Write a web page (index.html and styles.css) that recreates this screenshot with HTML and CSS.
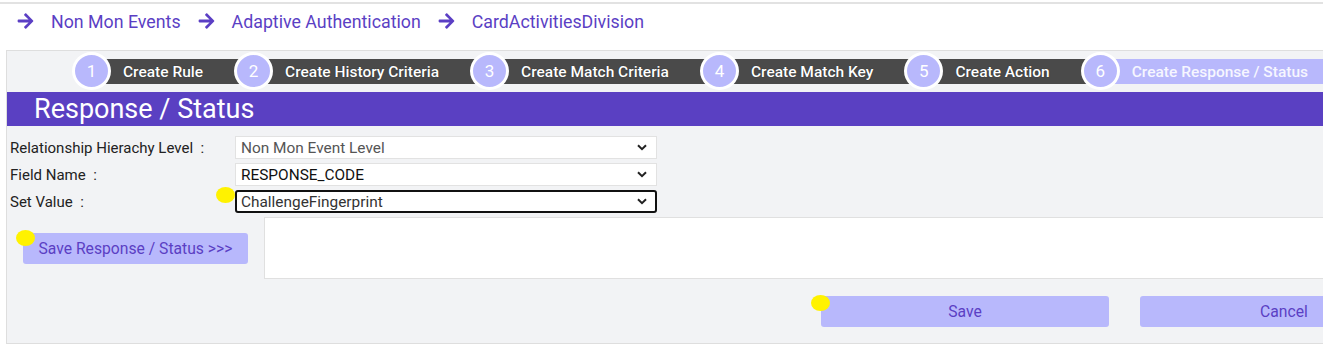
FILE: index.html
```html
<!DOCTYPE html>
<html lang="en">

<head>
    <meta charset="UTF-8">
    <meta name="viewport" content="width=device-width, initial-scale=1.0">
    <title>Response / Status</title>
    <link rel="stylesheet" href="styles.css">
</head>

<body>

    <div class="topline"></div>

    <div class="crumbs">
        <svg class="arrow" viewBox="0 0 448 512"><path d="M190.5 66.9l22.2-22.2c9.4-9.4 24.6-9.4 33.9 0L441 239c9.4 9.4 9.4 24.6 0 33.9L246.6 467.3c-9.4 9.4-24.6 9.4-33.9 0l-22.2-22.2c-9.5-9.5-9.3-25 .4-34.3L311.4 296H24c-13.3 0-24-10.7-24-24v-32c0-13.3 10.7-24 24-24h287.4L190.9 101.2c-9.8-9.3-10-24.8-.4-34.3z"/></svg>
        <a href="#">Non Mon Events</a>
        <svg class="arrow" viewBox="0 0 448 512"><path d="M190.5 66.9l22.2-22.2c9.4-9.4 24.6-9.4 33.9 0L441 239c9.4 9.4 9.4 24.6 0 33.9L246.6 467.3c-9.4 9.4-24.6 9.4-33.9 0l-22.2-22.2c-9.5-9.5-9.3-25 .4-34.3L311.4 296H24c-13.3 0-24-10.7-24-24v-32c0-13.3 10.7-24 24-24h287.4L190.9 101.2c-9.8-9.3-10-24.8-.4-34.3z"/></svg>
        <a href="#">Adaptive Authentication</a>
        <svg class="arrow" viewBox="0 0 448 512"><path d="M190.5 66.9l22.2-22.2c9.4-9.4 24.6-9.4 33.9 0L441 239c9.4 9.4 9.4 24.6 0 33.9L246.6 467.3c-9.4 9.4-24.6 9.4-33.9 0l-22.2-22.2c-9.5-9.5-9.3-25 .4-34.3L311.4 296H24c-13.3 0-24-10.7-24-24v-32c0-13.3 10.7-24 24-24h287.4L190.9 101.2c-9.8-9.3-10-24.8-.4-34.3z"/></svg>
        <a href="#">CardActivitiesDivision</a>
    </div>

    <div class="panel">
        <div class="steps">
            <div class="step"><span class="num">1</span><span class="label">Create Rule</span></div>
            <div class="step"><span class="num">2</span><span class="label">Create History Criteria</span></div>
            <div class="step"><span class="num">3</span><span class="label">Create Match Criteria</span></div>
            <div class="step"><span class="num">4</span><span class="label">Create Match Key</span></div>
            <div class="step"><span class="num">5</span><span class="label">Create Action</span></div>
            <div class="step active"><span class="num">6</span><span class="label">Create Response / Status</span></div>
        </div>

        <h2 class="title">Response / Status</h2>

        <form class="form">
            <div class="row">
                <label for="nivel">Relationship Hierachy Level &nbsp;:</label>
                <select id="nivel" class="sel gray">
                    <option>Non Mon Event Level</option>
                </select>
            </div>
            <div class="row">
                <label for="campo">Field Name &nbsp;:</label>
                <select id="campo" class="sel dark">
                    <option>RESPONSE_CODE</option>
                </select>
            </div>
            <div class="row">
                <label for="valor">Set Value &nbsp;:</label>
                <select id="valor" class="sel focused">
                    <option>ChallengeFingerprint</option>
                </select>
            </div>
        </form>

        <div class="save-area">
            <button type="button" class="btn btn-response">Save Response / Status &gt;&gt;&gt;</button>
            <div class="result"></div>
        </div>

        <div class="actions">
            <button type="button" class="btn btn-wide">Save</button>
            <button type="button" class="btn btn-wide">Cancel</button>
        </div>
    </div>

    <span class="dot dot-value"></span>
    <span class="dot dot-response"></span>
    <span class="dot dot-save"></span>

</body>

</html>
```

FILE: styles.css
```css
body {
    font-family: Roboto, "Liberation Sans", sans-serif;
    margin: 0;
    padding: 0;
    background-color: #fff;
    width: 1323px;
    height: 349px;
    overflow: hidden;
    position: relative;
}

.topline {
    margin-top: 2px;
    height: 2px;
    background-color: #e2e2e2;
}

.crumbs {
    height: 46px;
    display: flex;
    align-items: center;
    padding-left: 17px;
    padding-bottom: 12px;
    box-sizing: border-box;
}

.crumbs .arrow {
    width: 17px;
    height: 18px;
    fill: #5b3fc4;
    margin-right: 17px;
}

.crumbs a {
    color: #5b3fc4;
    text-decoration: none;
    font-size: 17.8px;
    margin-right: 17px;
}

.panel {
    margin-left: 6px;
    width: 1400px;
    height: 294px;
    box-sizing: border-box;
    border: 1px solid #dedede;
    background-color: #f2f3f5;
}

.steps {
    display: flex;
    padding-left: 65px;
    padding-top: 1px;
    height: 38px;
}

.step {
    display: flex;
    align-items: center;
    flex-shrink: 0;
}

.step .num {
    position: relative;
    z-index: 2;
    width: 39px;
    height: 38px;
    box-sizing: border-box;
    border: 3px solid #fff;
    border-radius: 50%;
    background-color: #b8b8fc;
    color: #fff;
    font-size: 17px;
    text-align: center;
    line-height: 33px;
}

.step .label {
    position: relative;
    z-index: 1;
    height: 25px;
    line-height: 27px;
    margin-left: -20px;
    margin-right: -20px;
    padding-left: 32px;
    padding-right: 51px;
    background-color: #4a4a4a;
    color: #fff;
    font-size: 15.5px;
    font-weight: 500;
    text-shadow: 0 0 1px rgba(0, 0, 0, 0.6);
    white-space: nowrap;
}

.step.active .label {
    background-color: #b8b8fc;
    color: #f6f6ff;
    text-shadow: none;
    padding-right: 200px;
}

.title {
    margin: 2px 0 0 0;
    height: 34px;
    line-height: 34px;
    padding-left: 27px;
    background-color: #5a40c2;
    color: #fff;
    font-size: 27px;
    font-weight: 400;
}

.form {
    padding: 10px 0 0 3px;
}

.row {
    display: flex;
    align-items: center;
    height: 23px;
    margin-bottom: 4px;
}

.row label {
    width: 225px;
    font-size: 15px;
    color: #222;
}

.sel {
    width: 422px;
    height: 23px;
    padding: 0 0 0 5px;
    border: 1px solid #e2e2e2;
    background-color: #fff;
    font-family: Roboto, "Liberation Sans", sans-serif;
    font-size: 15.4px;
    appearance: none;
    -webkit-appearance: none;
    background-image: url("data:image/svg+xml,%3Csvg xmlns='http://www.w3.org/2000/svg' width='10' height='7' viewBox='0 0 10 7'%3E%3Cpath d='M1 1.2l4 4 4-4' fill='none' stroke='%23222' stroke-width='2'/%3E%3C/svg%3E");
    background-repeat: no-repeat;
    background-position: right 9px center;
    box-sizing: border-box;
}

.sel.gray {
    color: #555;
}

.sel.dark {
    color: #111;
}

.sel.focused {
    color: #333;
    border: 2px solid #111;
    border-radius: 3px;
    padding-left: 4px;
    background-position: right 8px center;
}

.save-area {
    display: flex;
    align-items: flex-start;
}

.btn {
    border: none;
    background-color: #b8b8fc;
    color: #5b3fc4;
    font-family: Roboto, "Liberation Sans", sans-serif;
    font-size: 15.7px;
    border-radius: 3px;
    cursor: pointer;
}

.btn-response {
    margin: 16px 0 0 16px;
    width: 225px;
    height: 31px;
}

.result {
    margin-left: 16px;
    flex: 1;
    height: 62px;
    box-sizing: border-box;
    background-color: #fff;
    border: 1px solid #e0e0e0;
}

.actions {
    display: flex;
    gap: 31px;
    margin-top: 17px;
    padding-left: 814px;
}

.btn-wide {
    flex-shrink: 0;
    width: 288px;
    height: 31px;
}

.dot {
    position: absolute;
    width: 19px;
    height: 16px;
    border-radius: 50%;
    background-color: #fff200;
}

.dot-value {
    left: 216px;
    top: 187px;
}

.dot-response {
    left: 16px;
    top: 230px;
}

.dot-save {
    left: 811px;
    top: 295px;
}
```
